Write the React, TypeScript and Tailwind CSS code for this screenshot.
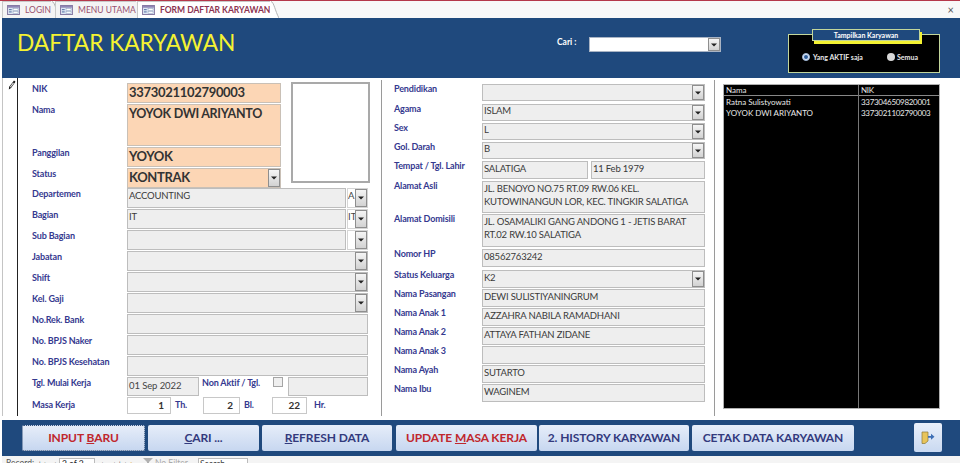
import React from "react";

const font = { fontFamily: '"Lato", "Liberation Sans", sans-serif' };

function FormIcon() {
  return (
    <svg width="13" height="10" viewBox="0 0 14 11" className="shrink-0">
      <rect x="0.5" y="0.5" width="13" height="10" fill="#dfe7f3" stroke="#7d6f9c" />
      <rect x="1" y="1" width="12" height="2" fill="#8f86b5" />
      <rect x="2" y="4.5" width="3" height="1.2" fill="#5a77a8" />
      <rect x="2" y="7" width="3" height="1.2" fill="#5a77a8" />
      <rect x="6.5" y="4" width="5.5" height="2" fill="#fff" stroke="#7f93b5" strokeWidth="0.5" />
      <rect x="6.5" y="7" width="5.5" height="2" fill="#fff" stroke="#7f93b5" strokeWidth="0.5" />
    </svg>
  );
}

function Tab({ label, active, cls }: { label: string; active?: boolean; cls: string }) {
  return (
    <div className={`flex items-center h-[17px] ${cls}`}>
      <div className={`flex-1 flex items-center gap-[5px] pl-[4px] h-full border-t border-l border-[#c9c9c9] ${active ? "bg-white" : "bg-[#f4f4f4]"}`}>
        <FormIcon />
        <span className={`text-[8.5px] whitespace-nowrap ${active ? "font-bold text-[#8c3350]" : "text-[#99506e]"}`}>{label}</span>
      </div>
      <svg width="9" height="17" viewBox="0 0 9 17" className="shrink-0">
        <path d="M0 0 H1 C4 1 5 10 9 17 H0 Z" fill={active ? "#fff" : "#f4f4f4"} />
        <path d="M1 0.5 C4 1 5 10 9 17" fill="none" stroke="#b5b5b5" />
      </svg>
    </div>
  );
}

function Arrow({ cls = "w-[12px]" }: { cls?: string }) {
  return (
    <div className={`shrink-0 self-stretch bg-gradient-to-b from-[#f5f5f5] to-[#d2d2d2] border border-[#8e8e8e] flex items-center justify-center ${cls}`}>
      <svg width="6" height="4" viewBox="0 0 6 4"><path d="M0 0.5H6L3 3.5Z" fill="#222" /></svg>
    </div>
  );
}

function Label({ children, cls = "", lh = "leading-[12px]" }: { children: React.ReactNode; cls?: string; lh?: string }) {
  return <div className={`font-bold text-[9px] tracking-[-0.15px] text-[#35398f] whitespace-nowrap ${lh} ${cls}`}>{children}</div>;
}

function Field({ value, cls = "", combo, text = "pt-[1px] leading-[12px]" }: { value?: string; cls?: string; combo?: boolean; text?: string }) {
  return (
    <div className={`flex items-stretch bg-[#eeeeee] border border-[#bdbdbd] min-w-0 ${cls}`}>
      <div className={`flex-1 px-[1px] text-[9.5px] tracking-[-0.2px] text-[#3a3a3a] whitespace-pre overflow-hidden ${text}`}>{value}</div>
      {combo && <Arrow />}
    </div>
  );
}

function Peach({ value, cls, combo, text = "text-[13px]" }: { value: string; cls: string; combo?: boolean; text?: string }) {
  return (
    <div className={`flex items-stretch bg-[#fcd6b5] border border-[#c9c0b6] ${cls}`}>
      <div className={`flex-1 pl-[1px] font-bold leading-[17px] text-[#333] tracking-[-0.3px] whitespace-nowrap ${text}`}>{value}</div>
      {combo && <Arrow />}
    </div>
  );
}

function LeftRow({ label, value, combo }: { label: string; value?: string; combo?: boolean }) {
  return (
    <div className="flex h-[20px] mt-[1px]">
      <Label cls="w-[95px]">{label}</Label>
      <Field value={value} combo={combo} cls="w-[241px]" />
    </div>
  );
}

function SplitRow({ label, value, side, mt = "mt-[1px]" }: { label: string; value?: string; side?: string; mt?: string }) {
  return (
    <div className={`flex h-[20px] ${mt}`}>
      <Label cls="w-[95px]">{label}</Label>
      <Field value={value} cls="w-[219px]" />
      <div className="ml-[1px] w-[21px] flex bg-white border border-[#d5d5d5] overflow-hidden">
        <div className="w-[8px] text-[9.5px] leading-[12px] text-[#444] pt-[1px] overflow-hidden">{side}</div>
        <Arrow cls="w-[12px]" />
      </div>
    </div>
  );
}

function MidRow({ label, value, h, mt, combo, text }: { label: string; value?: string; h: string; mt: string; combo?: boolean; text?: string }) {
  return (
    <div className={`flex ${h} ${mt}`}>
      <Label cls="w-[88px]" lh="leading-[10px]">{label}</Label>
      <Field value={value} combo={combo} cls="w-[223px]" text={text} />
    </div>
  );
}

function Btn({ children, cls, red }: { children: React.ReactNode; cls: string; red?: boolean }) {
  return (
    <div className={`h-[26px] rounded-[2px] bg-gradient-to-b from-[#e6edf9] to-[#c7d7f0] flex items-center justify-center font-bold text-[12px] tracking-[-0.1px] whitespace-nowrap ${red ? "text-[#c0272d]" : "text-[#333a7d]"} ${cls}`}>
      {children}
    </div>
  );
}

export default function App() {
  return (
    <div style={font} className="w-[960px] h-[463px] overflow-hidden bg-white flex flex-col">
      <div className="h-[1px] bg-[#b5374a] shrink-0" />
      {/* tabs */}
      <div className="h-[17px] shrink-0 flex items-end pl-[2px] bg-[#f8f8f8]">
        <Tab label="LOGIN" cls="w-[53px]" />
        <Tab label="MENU UTAMA" cls="w-[82px]" />
        <Tab label="FORM DAFTAR KARYAWAN" active cls="w-[135px]" />
        <div className="ml-auto mr-[6px] self-center text-[#555] text-[11px] leading-none">×</div>
      </div>
      {/* header */}
      <div className="h-[60px] shrink-0 ml-[2px] bg-[#1f497d] flex items-start">
        <div className="ml-[15px] mt-[9px] w-[540px] text-[22.7px] leading-[32px] text-[#f4f232]">DAFTAR KARYAWAN</div>
        <div className="mt-[18px] w-[32px] font-bold text-[8.5px] leading-[12px] text-white">Cari :</div>
        <div className="mt-[19px] w-[132px] h-[15px] flex bg-white border border-[#a9b4c4]">
          <div className="flex-1" />
          <Arrow />
        </div>
        <div className="ml-[67px] mt-[16px] w-[152px] h-[39px] bg-black border border-[#c3d69b] relative flex items-start pl-[13px] pt-[18px]">
          <div className="absolute left-[23px] -top-[6px] w-[108px] h-[12px] bg-[#1f497d] border border-[#c3d69b] shadow-[2px_3px_0_#f4f232] text-center text-white font-bold text-[7px] leading-[10px]">
            Tampilkan Karyawan
          </div>
          <div className="w-[8px] h-[8px] rounded-full bg-[#d8e4f4] border border-[#9fb6d6] flex items-center justify-center">
            <div className="w-[4px] h-[4px] rounded-full bg-[#2c5c99]" />
          </div>
          <div className="ml-[3px] w-[74px] font-bold text-[7px] leading-[8px] text-[#e8e8e8]">Yang AKTIF saja</div>
          <div className="w-[8px] h-[8px] rounded-full bg-[#d8d8d8]" />
          <div className="ml-[2px] font-bold text-[7px] leading-[8px] text-[#e8e8e8]">Semua</div>
        </div>
      </div>
      {/* body */}
      <div className="h-[342px] shrink-0 flex">
        <div className="w-[16px] ml-[2px] shrink-0 border-l border-[#c4c4c4] border-r border-r-[#222] flex justify-center items-start pl-[3px] pt-[2px] mb-[4px]">
          <svg width="8" height="10" viewBox="0 0 8 10">
            <path d="M6 0.5L7.5 1.8L3 8L0.8 9.4L1.2 6.8Z" fill="#111" />
            <path d="M5 2.5L6 3.3L2.6 7.6L1.8 7Z" fill="#ddd" />
          </svg>
        </div>
        {/* left */}
        <div className="w-[349px] shrink-0 ml-[14px] pt-[5px]">
          <div className="flex">
            <div className="w-[249px] shrink-0">
              <div className="flex h-[20px]">
                <Label cls="w-[95px]">NIK</Label>
                <Peach value="3373021102790003" cls="w-[154px]" />
              </div>
              <div className="flex h-[42px] mt-[1px]">
                <Label cls="w-[95px]">Nama</Label>
                <Peach value="YOYOK DWI ARIYANTO" cls="w-[154px]" text="text-[12.5px]" />
              </div>
              <div className="flex h-[20px] mt-[1px]">
                <Label cls="w-[95px]">Panggilan</Label>
                <Peach value="YOYOK" cls="w-[154px]" />
              </div>
              <div className="flex h-[20px] mt-[1px]">
                <Label cls="w-[95px]">Status</Label>
                <Peach value="KONTRAK" combo cls="w-[154px]" />
              </div>
            </div>
            <div className="ml-[10px] w-[79px] h-[101px] -mt-[1px] bg-white border-2 border-[#a9a9a9]" />
          </div>
          <SplitRow label="Departemen" value="ACCOUNTING" side="A" mt="" />
          <SplitRow label="Bagian" value="IT" side="IT" />
          <SplitRow label="Sub Bagian" />
          <LeftRow label="Jabatan" combo />
          <LeftRow label="Shift" combo />
          <LeftRow label="Kel. Gaji" combo />
          <LeftRow label="No.Rek. Bank" />
          <LeftRow label="No. BPJS Naker" />
          <LeftRow label="No. BPJS Kesehatan" />
          <div className="flex h-[19px] mt-[1px]">
            <Label cls="w-[95px]">Tgl. Mulai Kerja</Label>
            <div className="w-[72px] bg-[#eeeeee] border border-[#bdbdbd] text-[9.5px] tracking-[-0.1px] leading-[12px] pt-[2px] px-[1px] text-[#444]">01 Sep 2022</div>
            <Label cls="ml-[3px] w-[71px]">Non Aktif / Tgl.</Label>
            <div className="w-[10px] h-[10px] border border-[#a5a5a5] bg-[#efefef]" />
            <div className="ml-[5px] w-[80px] bg-[#eeeeee] border border-[#bdbdbd]" />
          </div>
          <div className="flex h-[17px] mt-[1px]">
            <Label cls="w-[95px] pt-[2px]">Masa Kerja</Label>
            <div className="flex w-[76px]">
              <div className="w-[44px] border border-[#c8c8c8] bg-white text-right pr-[6px] font-bold text-[10px] leading-[14px] text-[#333]">1</div>
              <Label cls="ml-[4px] pt-[2px]">Th.</Label>
            </div>
            <div className="flex w-[69px]">
              <div className="w-[37px] border border-[#c8c8c8] bg-white text-right pr-[6px] font-bold text-[10px] leading-[14px] text-[#333]">2</div>
              <Label cls="ml-[4px] pt-[2px]">Bl.</Label>
            </div>
            <div className="flex">
              <div className="w-[35px] border border-[#c8c8c8] bg-white text-right pr-[6px] font-bold text-[10px] leading-[14px] text-[#333]">22</div>
              <Label cls="ml-[7px] pt-[2px]">Hr.</Label>
            </div>
          </div>
        </div>
        {/* divider */}
        <div className="w-[1px] shrink-0 bg-[#9a9a9a] mt-[2px] mb-[4px]" />
        {/* middle */}
        <div className="w-[311px] shrink-0 ml-[12px] pt-[6px]">
          <MidRow label="Pendidikan" h="h-[17px]" mt="" combo />
          <MidRow label="Agama" value="ISLAM" h="h-[17px]" mt="mt-[3px]" combo text="leading-[12px]" />
          <MidRow label="Sex" value="L" h="h-[17px]" mt="mt-[2px]" combo text="leading-[12px]" />
          <MidRow label="Gol. Darah" value="B" h="h-[17px]" mt="mt-[2px]" combo text="leading-[12px]" />
          <div className="flex h-[18px] mt-[2px]">
            <Label cls="w-[88px]" lh="leading-[10px]">Tempat / Tgl. Lahir</Label>
            <Field value="SALATIGA" cls="w-[106px]" />
            <Field value="11 Feb 1979" cls="ml-[3px] w-[114px]" />
          </div>
          <MidRow label="Alamat Asli" value={"JL. BENOYO NO.75 RT.09 RW.06 KEL.\nKUTOWINANGUN LOR, KEC. TINGKIR SALATIGA"} h="h-[32px]" mt="mt-[2px]" text="leading-[13px]" />
          <MidRow label="Alamat Domisili" value={"JL. OSAMALIKI GANG ANDONG 1 - JETIS BARAT\nRT.02 RW.10 SALATIGA"} h="h-[33px]" mt="mt-[1px]" text="leading-[13px]" />
          <MidRow label="Nomor HP" value="08562763242" h="h-[18px]" mt="mt-[2px]" />
          <MidRow label="Status Keluarga" value="K2" h="h-[18px]" mt="mt-[3px]" combo />
          <MidRow label="Nama Pasangan" value="DEWI SULISTIYANINGRUM" h="h-[18px]" mt="mt-[1px]" />
          <MidRow label="Nama Anak 1" value="AZZAHRA NABILA RAMADHANI" h="h-[18px]" mt="mt-[1px]" />
          <MidRow label="Nama Anak 2" value="ATTAYA FATHAN ZIDANE" h="h-[18px]" mt="mt-[1px]" />
          <MidRow label="Nama Anak 3" h="h-[18px]" mt="mt-[1px]" />
          <MidRow label="Nama Ayah" value="SUTARTO" h="h-[18px]" mt="mt-[1px]" />
          <MidRow label="Nama Ibu" value="WAGINEM" h="h-[18px]" mt="mt-[1px]" />
        </div>
        <div className="w-[1px] shrink-0 bg-[#9a9a9a] ml-[9px] mt-[2px] mb-[4px]" />
        {/* list */}
        <div className="ml-[8px] mt-[6px] mb-[11px] w-[217px] shrink-0 bg-black border border-[#b0b0b0] flex text-[8px] leading-[10px] text-[#e8e8e8]">
          <div className="w-[135px] shrink-0 border-r border-[#777]">
            <div className="h-[11px] border-b border-[#888] pl-[2px]">Nama</div>
            <div className="pl-[2px] pt-[1px]">Ratna Sulistyowati</div>
            <div className="pl-[2px] pt-[1px]">YOYOK DWI ARIYANTO</div>
          </div>
          <div className="flex-1 tracking-[-0.3px]">
            <div className="h-[11px] border-b border-[#888] pl-[2px]">NIK</div>
            <div className="pl-[2px] pt-[1px]">3373046509820001</div>
            <div className="pl-[2px] pt-[1px]">3373021102790003</div>
          </div>
        </div>
      </div>
      {/* footer */}
      <div className="h-[36px] shrink-0 ml-[2px] bg-[#1f497d] flex items-start pl-[20px] pt-[5px]">
        <Btn red cls="w-[123px] border border-dotted border-[#33507a]">INPUT&nbsp;<span className="underline">B</span>ARU</Btn>
        <Btn cls="w-[111px] ml-[3px]"><span className="underline">C</span>ARI ...</Btn>
        <Btn cls="w-[130px] ml-[3px]"><span className="underline">R</span>EFRESH DATA</Btn>
        <Btn red cls="w-[141px] ml-[4px]">UPDATE&nbsp;<span className="underline">M</span>ASA KERJA</Btn>
        <Btn cls="w-[150px] ml-[2px]">2. HISTORY KARYAWAN</Btn>
        <Btn cls="w-[162px] ml-[3px]">CETAK DATA KARYAWAN</Btn>
        <div className="ml-[60px] -mt-[2px] w-[28px] h-[29px] rounded-[2px] bg-gradient-to-b from-[#eaf0fa] to-[#c9d9f1] flex items-center justify-center">
          <svg width="14" height="13" viewBox="0 0 14 13">
            <path d="M1 1H7V10L4 12.5H1Z" fill="#e8c45a" stroke="#8a7a3a" strokeWidth="0.7" />
            <path d="M7 5H10V2.8L13.5 5.8L10 8.8V6.8H7Z" fill="#3d6fb5" />
          </svg>
        </div>
      </div>
      {/* nav */}
      <div className="flex-1 ml-[2px] bg-[#f4f4f4] flex items-start text-[8.5px] leading-[11px] text-[#555] pt-[2px] overflow-hidden whitespace-nowrap">
        <span className="ml-[4px] w-[33px]">Record:</span>
        <span className="w-[12px] text-[6px] text-[#222]">|◄</span>
        <span className="w-[8px] text-[6px] text-[#222]">◄</span>
        <span className="w-[36px] bg-white border border-[#bbb] pl-[2px] text-[#222] h-[11px]">2 of 2</span>
        <span className="ml-[6px] w-[12px] text-[6px] text-[#222]">►</span>
        <span className="w-[11px] text-[6px] text-[#222]">►|</span>
        <span className="w-[19px] text-[6px] text-[#222]">►<span className="text-[#e0a020]">*</span></span>
        <svg width="10" height="8" viewBox="0 0 10 8" className="mr-[2px]"><path d="M0 0H10L6 4V8H4V4Z" fill="#b0b0b0" /></svg>
        <span className="w-[43px] text-[#aaa]">No Filter</span>
        <span className="w-[50px] bg-white border border-[#bbb] pl-[1px] text-[#333] h-[11px]">Search</span>
      </div>
    </div>
  );
}
